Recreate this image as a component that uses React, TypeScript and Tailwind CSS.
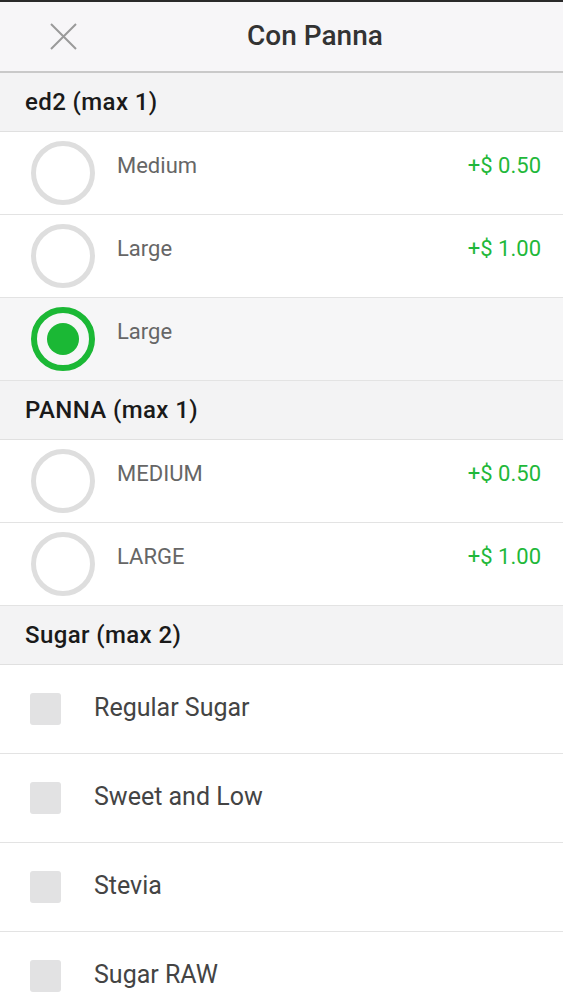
import React from "react";

const font = { fontFamily: "Roboto, 'Noto Sans', sans-serif" };

function Radio({ checked }: { checked?: boolean }) {
  return checked ? (
    <div className="w-[64px] h-[64px] rounded-full border-[6px] border-[#1bb835] flex items-center justify-center shrink-0">
      <div className="w-[32px] h-[32px] rounded-full bg-[#1bb835]" />
    </div>
  ) : (
    <div className="w-[64px] h-[64px] rounded-full border-[5px] border-[#dedede] shrink-0" />
  );
}

function RadioRow({ label, price, checked }: { label: string; price?: string; checked?: boolean }) {
  return (
    <div
      className={`h-[83px] flex items-center pl-[31px] pr-[22px] border-b border-[#e3e3e3] ${
        checked ? "bg-[#f6f6f7]" : "bg-white"
      }`}
    >
      <Radio checked={checked} />
      <div className="ml-[22px] flex-1 text-[22px] text-[#666] pb-[16px]">{label}</div>
      {price && <div className="text-[22px] text-[#1fb83a] pb-[16px]">{price}</div>}
    </div>
  );
}

function Section({ title }: { title: string }) {
  return (
    <div className="h-[59px] flex items-center pl-[25px] bg-[#f3f3f4] border-b border-[#e0e0e0]">
      <span className="text-[24px] font-medium tracking-[0.4px] text-[#1a1a1a]">{title}</span>
    </div>
  );
}

function CheckRow({ label }: { label: string }) {
  return (
    <div className="h-[89px] flex items-center pl-[30px] border-b border-[#e3e3e3] bg-white">
      <div className="w-[31px] h-[32px] rounded-[3px] bg-[#e2e2e3] shrink-0" />
      <div className="ml-[33px] text-[25px] text-[#444] pb-[2px]">{label}</div>
    </div>
  );
}

export default function App() {
  return (
    <div className="w-[563px] h-[1000px] overflow-hidden bg-white" style={font}>
      <div className="h-[2px] bg-[#2a2a2a]" />
      <div className="h-[71px] flex items-center bg-[#f7f6f8] border-b-2 border-[#c9c9c9]">
        <div className="w-[126px] flex justify-center">
          <svg width="27" height="27" viewBox="0 0 27 27">
            <path d="M1 1 L26 26 M26 1 L1 26" stroke="#9a9a9a" strokeWidth="2" />
          </svg>
        </div>
        <div className="flex-1 text-center pr-[59px] pb-[2px] text-[28px] font-medium text-[#333]">Con Panna</div>
      </div>
      <Section title="ed2 (max 1)" />
      <RadioRow label="Medium" price="+$ 0.50" />
      <RadioRow label="Large" price="+$ 1.00" />
      <RadioRow label="Large" checked />
      <Section title="PANNA (max 1)" />
      <RadioRow label="MEDIUM" price="+$ 0.50" />
      <RadioRow label="LARGE" price="+$ 1.00" />
      <Section title="Sugar (max 2)" />
      <CheckRow label="Regular Sugar" />
      <CheckRow label="Sweet and Low" />
      <CheckRow label="Stevia" />
      <CheckRow label="Sugar RAW" />
    </div>
  );
}
